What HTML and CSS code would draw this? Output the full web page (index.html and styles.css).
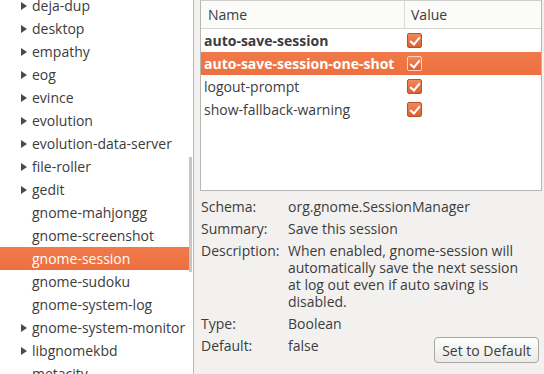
FILE: index.html
```html
<!DOCTYPE html>
<html lang="en">
<head>
  <meta charset="UTF-8">
  <title>dconf Editor</title>
  <link rel="stylesheet" href="styles.css">
</head>
<body>
  <div class="window">
    <!-- schema tree -->
    <div class="tree-pane">
      <ul class="tree">
        <li class="node has-kids">deja-dup</li>
        <li class="node has-kids">desktop</li>
        <li class="node has-kids">empathy</li>
        <li class="node has-kids">eog</li>
        <li class="node has-kids">evince</li>
        <li class="node has-kids">evolution</li>
        <li class="node has-kids">evolution-data-server</li>
        <li class="node has-kids">file-roller</li>
        <li class="node has-kids">gedit</li>
        <li class="node">gnome-mahjongg</li>
        <li class="node">gnome-screenshot</li>
        <li class="node selected">gnome-session</li>
        <li class="node">gnome-sudoku</li>
        <li class="node">gnome-system-log</li>
        <li class="node has-kids">gnome-system-monitor</li>
        <li class="node has-kids">libgnomekbd</li>
        <li class="node">metacity</li>
      </ul>
      <div class="scroll-thumb"></div>
    </div>

    <!-- keys and details -->
    <div class="key-pane">
      <div class="key-table">
        <div class="key-head">
          <div class="col-name">Name</div>
          <div class="col-value">Value</div>
        </div>
        <div class="key-row bold">
          <div class="col-name">auto-save-session</div>
          <div class="col-value"><span class="check"></span></div>
        </div>
        <div class="key-row selected bold">
          <div class="col-name">auto-save-session-one-shot</div>
          <div class="col-value"><span class="check"></span></div>
        </div>
        <div class="key-row">
          <div class="col-name">logout-prompt</div>
          <div class="col-value"><span class="check"></span></div>
        </div>
        <div class="key-row">
          <div class="col-name">show-fallback-warning</div>
          <div class="col-value"><span class="check"></span></div>
        </div>
      </div>

      <div class="details">
        <div class="label">Schema:</div>
        <div class="value">org.gnome.SessionManager</div>
        <div class="label">Summary:</div>
        <div class="value">Save this session</div>
        <div class="label">Description:</div>
        <div class="value wrap">When enabled, gnome-session will automatically save the next session at log out even if auto saving is disabled.</div>
        <div class="label">Type:</div>
        <div class="value">Boolean</div>
        <div class="label">Default:</div>
        <div class="value default-row">
          <span>false</span>
          <button class="default-btn">Set to Default</button>
        </div>
      </div>
    </div>
  </div>
</body>
</html>
```

FILE: styles.css
```css
body {
  margin: 0;
  font-family: "Open Sans", "DejaVu Sans", sans-serif;
  font-size: 14px;
  color: #3c3c3c;
  background: #f2f1f0;
}
.window {
  display: flex;
  width: 544px;
  height: 374px;
  overflow: hidden;
}
.tree-pane {
  position: relative;
  width: 193px;
  flex: none;
  background: #fff;
  border-right: 1px solid #bcbab6;
  overflow: hidden;
}
.tree {
  list-style: none;
  margin: -6px 0 0 0;
  padding: 0;
}
.node {
  height: 23px;
  line-height: 23px;
  padding-left: 32px;
  margin-right: 3px;
  position: relative;
  white-space: nowrap;
}
.node.has-kids::before {
  content: "";
  position: absolute;
  left: 21px;
  top: 8px;
  border-left: 6px solid #4a4a4a;
  border-top: 4px solid transparent;
  border-bottom: 4px solid transparent;
}
.node.selected {
  background: linear-gradient(#f07a4a, #ee6f3f);
  color: #fff;
}
.scroll-thumb {
  position: absolute;
  left: 189px;
  top: 157px;
  width: 3px;
  height: 115px;
  background: #c8c6c2;
}
.key-pane {
  flex: 1;
  padding: 0 2px 0 6px;
  display: flex;
  flex-direction: column;
}
.key-table {
  height: 189px;
  background: #fff;
  border: 1px solid #b8b6b2;
  border-top-color: #cfcdc9;
}
.key-head {
  display: flex;
  height: 27px;
  line-height: 27px;
  background: #fbfbfa;
  border-bottom: 1px solid #d6d4d0;
}
.key-head .col-name {
  border-right: 1px solid #dcdad6;
  padding-left: 7px;
}
.key-head .col-value {
  padding-left: 6px;
}
.col-name {
  width: 196px;
  padding-left: 3px;
  white-space: nowrap;
}
.key-row {
  display: flex;
  height: 23px;
  line-height: 23px;
}
.key-row.bold .col-name {
  font-weight: bold;
}
.key-row.selected {
  background: linear-gradient(#f07a4a, #ee6f3f);
  color: #fff;
}
.key-row .col-value {
  padding-left: 7px;
  display: flex;
  align-items: center;
}
.check {
  width: 13px;
  height: 13px;
  border: 1px solid #b8522a;
  border-radius: 2px;
  background: linear-gradient(#f08a5c, #dd5f30) ;
  position: relative;
}
.check::after {
  content: "";
  position: absolute;
  left: 4px;
  top: 1px;
  width: 4px;
  height: 8px;
  border-right: 2px solid #fff;
  border-bottom: 2px solid #fff;
  transform: rotate(40deg);
}
.key-row.selected .check {
  border-color: #fbd2c0;
}
.details {
  display: grid;
  grid-template-columns: 87px 1fr;
  row-gap: 5px;
  line-height: 17px;
  margin-top: 7px;
  padding-left: 1px;
}
.value.wrap {
  max-width: 234px;
}
.default-row {
  display: flex;
  justify-content: space-between;
  align-items: flex-start;
}
.default-btn {
  margin-right: 3px;
  height: 26px;
  padding: 0 7px;
  font-family: inherit;
  font-size: 14px;
  color: #3c3c3c;
  border: 1px solid #a9a7a3;
  border-radius: 4px;
  background: linear-gradient(#fdfdfc, #ebeae8);
}
```
